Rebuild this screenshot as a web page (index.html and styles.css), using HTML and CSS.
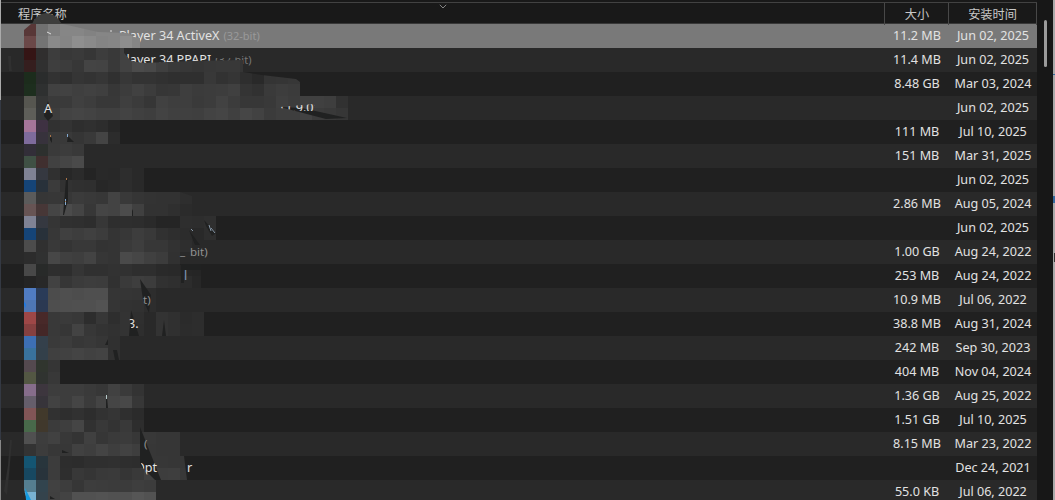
FILE: index.html
```
<!DOCTYPE html>
<html lang="zh-CN">
<head>
    <meta charset="UTF-8">
    <meta name="viewport" content="width=device-width, initial-scale=1.0">
    <title>程序列表</title>
    <link rel="stylesheet" href="styles.css">
</head>
<body>
    <div class="window">
        <div class="left-edge"></div>
        <div class="list">
            <div class="top-line"></div>
            <div class="row header">
                <div class="name">程序名称</div>
                <div class="size">大小</div>
                <div class="date">安装时间</div>
                <svg class="sort-arrow" width="8" height="5" viewBox="0 0 8 5"><path d="M0.8 0.8L4 4L7.2 0.8" fill="none" stroke="#858585"/></svg>
            </div>
            <div id="program-list">
                <!-- Program rows are added here -->
            </div>
        </div>
        <div class="scrollbar"><div class="thumb"></div></div>
        <div class="right-edge"><i class="mark mark-1"></i><i class="mark mark-2"></i><i class="mark mark-3"></i></div>
    </div>

    <!-- Mosaic over the program names -->
    <svg class="mosaic" width="360" height="500" viewBox="0 0 360 500">
        <defs>
            <clipPath id="brush">
                <path d="M24 30L31 24H63L98 32L128 33L134 37L140 38V48H124V53L131 61L144 63L190 61L243 60V72L262 75L296 79L300 82V96H348V120H120V144H84V168H144V192H180L192 196V216H216V240H207V252H180V265H201V288H156V312H204V336H120V360H60V384H144V432H180V456H184L187 480H156V500H27L24 490Z"/>
            </clipPath>
            <clipPath id="cut-version"><path d="M280 107L314 104L316 111L300 111L280 108Z"/></clipPath>
            <clipPath id="cut-three"><path d="M129 316H140V332H132Z"/></clipPath>
            <clipPath id="cut-opt"><path d="M140 461H160V475H147L142 466Z"/></clipPath>
        </defs>
        <path d="M32 24Q36 14 46 13Q55 13 62 24Z" fill="#3d3d3c"/>
        <path d="M118 53H122L120 57L126 62H118ZM216 53H240V57L232 58H216Z" fill="#292929"/>
        <g id="blocks" clip-path="url(#brush)" shape-rendering="crispEdges"></g>
        <g fill="#202121">
            <path d="M48 101L51 110L53 116L48 121L44 116L45 110Z"/>
            <path d="M280 107L302 108L347 118L326 119Z"/>
            <path d="M50 136L52 138V143L50 140Z"/>
            <path d="M68 136L74 142H67Z"/>
            <path d="M66 179H68V200L64 215H63Z"/>
            <path d="M132 209L133 211V216H132Z"/>
            <path d="M189 230L200 245H195Z"/>
            <path d="M204 220L216 233L212 236L206 226Z"/>
            <path d="M140 279L151 295L149 313L143 300Z"/>
            <path d="M131 310L139 336H129Z"/>
            <path d="M164 320L166 336H162Z"/>
            <path d="M108 339V345H105Z"/>
            <path d="M113 350H117L119 360H115Z"/>
            <path d="M106 397H107L108 408H106Z"/>
            <path d="M140 427L161 480H155L140 465Z"/>
            <path d="M62 450L69 453H62Z"/>
            <path d="M50 496L55 499H50Z"/>
            <path d="M181 264H201V270H184V283H181Z"/>
        </g>
        <g class="pieces">
            <text x="44" y="113">A</text>
            <text x="278" y="112" clip-path="url(#cut-version)">11.9.01</text>
            <text x="180" y="255" class="dim">_</text>
            <text x="190" y="256" class="dim">bit)</text>
            <text x="184" y="280" class="blue">l</text>
            <text x="143" y="304" class="dim">t)</text>
            <text x="128" y="328" clip-path="url(#cut-three)">3.</text>
            <text x="144" y="448" class="dim">(</text>
            <text x="135" y="472" clip-path="url(#cut-opt)">Opt</text>
            <text x="187" y="472">r</text>
        </g>
        <path d="M47 32L51 34M110 31H112" stroke="#dddddd"/>
        <path d="M67.500 134V137M65.500 199V205" stroke="#82a9d0"/>
        <path d="M50.500 135V137M66.500 178V180M65.500 201V202" stroke="#a87348"/>
        <path d="M106.500 395V399" stroke="#b4c8c8"/>
        <path d="M209 225L211 231M211 228L215 233M191 229L193 231" stroke="#8797a7"/>
        <path d="M24 302Q27 304 25 308Z" fill="#0d7cf5"/>
        <path d="M25 488L31 500H26Z" fill="#159be1"/>
        <path d="M8 56H11V64L12 71H9ZM10 440H12L9 474L7 495L4 491L8 465Z" fill="#303030"/>
    </svg>

    <script>
        const programs = [
            ['Player 34 ActiveX', '(32-bit)', '11.2 MB', 'Jun 02, 2025'],
            ['Player 34 PPAPI', '(32-bit)', '11.4 MB', 'Jun 02, 2025'],
            ['', '', '8.48 GB', 'Mar 03, 2024'],
            ['', '', '', 'Jun 02, 2025'],
            ['', '', '111 MB', 'Jul 10, 2025'],
            ['', '', '151 MB', 'Mar 31, 2025'],
            ['', '', '', 'Jun 02, 2025'],
            ['', '', '2.86 MB', 'Aug 05, 2024'],
            ['', '', '', 'Jun 02, 2025'],
            ['', '', '1.00 GB', 'Aug 24, 2022'],
            ['', '', '253 MB', 'Aug 24, 2022'],
            ['', '', '10.9 MB', 'Jul 06, 2022'],
            ['', '', '38.8 MB', 'Aug 31, 2024'],
            ['', '', '242 MB', 'Sep 30, 2023'],
            ['', '', '404 MB', 'Nov 04, 2024'],
            ['', '', '1.36 GB', 'Aug 25, 2022'],
            ['', '', '1.51 GB', 'Jul 10, 2025'],
            ['', '', '8.15 MB', 'Mar 23, 2022'],
            ['', '', '', 'Dec 24, 2021'],
            ['', '', '55.0 KB', 'Jul 06, 2022']
        ];

        // one line per 12px of height: two icon colours, then grey levels
        const blocks = [
            '583737 707070 7e 86 86 82 86 86 86',
            '6b4848 747474 8a 85 8f 8a 84 86 8e 86',
            '351515 302e2e 3d 38 3a 36 3d 39 40 46',
            '351e1e 303030 3e 3c 37 44 43 39 42 4b 48 3f 39 37 35 37 38 38 35 34',
            '1c2c1c 2a2c2c 32 2f 35 33 36 30 37 33 33 31 2f 2f 2f 38 32 35 2e 29 34 35 37 36 37',
            '1d2e1e 2e3030 41 42 3f 41 3f 37 3c 41 3c 36 37 3e 3b 3c 3d 40 34 31 3a 3d 3b 3a 3f',
            '565650 343535 3a 3a 40 3d 38 38 3f 3b 36 41 3e 3e 3a 3c 42 3c 37 37 39 3f 3c 40 40 3e 31',
            '5e5e59 343637 3d 43 45 43 40 40 43 40 3e 43 40 40 3f 43 45 40 46 42 3b 3e 3e 42 3b 39 36',
            'a57599 3e3142 31 33 2e 30 2d 27',
            '7e6b9c 37323c 39 39 35 39 44 2c',
            '322e38 2d302e 3a 3c 39',
            '3f5044 402f2f 41 45 4a',
            '7f8294 353840 30 27 2b 24 29 28 2d 29',
            '154477 28313a 3b 32 30 2f 27 29 2d 29',
            '5b5b5b 363636 37 37 3b 39 37 43 39 35 33 32 32 2e',
            '675454 473737 45 4b 44 37 45 43 4c 40 32 32 2f 2b',
            '7f8294 353840 35 30 2f 2d 37 2e 2e 2d 2a 25 25 2e 2d 2f',
            '154477 28313a 37 40 3d 40 3c 34 37 3d 39 31 2e 2c 29 2e',
            '4c4c4c 303030 39 34 38 38 33 34 3a 3e 37 37 32 2e',
            '2c2c2c 303131 47 40 3e 43 36 34 4a 46 40 3c 31 2d',
            '484848 282a29 2e 2d 35 30 30 32 31 2e 2e 2a 29 26 25',
            '242424 282828 42 36 3b 3d 3c 31 3a 3e 3c 31 2f 2c 27',
            '507cc3 2a3b58 4c 4f 4d 4f 4f 35 35 34 2d',
            '4e77b5 2b3952 4e 4f 50 50 53 35 32 31 2d',
            '9e4747 482929 39 3a 38 2d 37 2e 33 2f 29 33 30 2b 2d',
            '854040 442727 39 36 43 37 33 31 33 2e 29 33 30 2c 2d',
            '3d6fb4 34404b 3a 3c 37 39 36 30 2b',
            '39729d 33404a 40 41 44 41 43 30 2c',
            '54494f 30352e 35',
            '535743 303330 38',
            '866d8b 3d363e 3d 3d 3d 3a 37 41 3a 33',
            '655e6b 37343a 42 3d 45 3b 44 45 48 37',
            '815556 41392b 31 2e 31 2d 32 35 2f 2b',
            '48694a 40382c 3b 3e 45 31 38 33 39 2d',
            '505050 3d3d3d 41 38 34 40 36 3a 3b 37 38 36 36',
            '333333 3c3c3c 37 37 41 3e 44 3e 42 3e 37 36 36',
            '145572 28353c 3c 2d 2c 2f 2f 30 2e 2d 37 37 36 36',
            '174861 28333b 3c 2e 38 35 39 3a 35 39 40 3d 3e 38',
            '557e90 32444e 41 3d 36 3d 3c 3b 3b 3e 3c',
            '78b2d2 34434c 40 43 51 51 53 51 51 56 52'
        ];

        document.getElementById('program-list').innerHTML = programs.map(p => `
            <div class="row">
                <div class="name">${p[0]}<span class="bits">${p[1]}</span></div>
                <div class="size">${p[2]}</div>
                <div class="date">${p[3]}</div>
            </div>`).join('');

        let rects = '';
        blocks.forEach((line, y) => {
            line.split(' ').forEach((c, x) => {
                const color = c.length === 2 ? c + c + c : c;
                rects += `<rect x="${24 + x * 12}" y="${24 + y * 12}" width="12" height="12" fill="#${color}"/>`;
            });
        });
        document.getElementById('blocks').innerHTML = rects;
    </script>
</body>
</html>
```
FILE: styles.css
```
body {
    margin: 0;
    background-color: #171717;
    font-family: "Noto Sans", "Noto Sans CJK SC", sans-serif;
    font-size: 12.6px;
    color: #e2e2e2;
    overflow: hidden;
}
.window {
    display: flex;
    height: 500px;
    overflow: hidden;
}
.left-edge {
    width: 1px;
    background: linear-gradient(#aaaaaa 100px, #343943 100px, #343943 440px, #888888 440px);
}
.list {
    width: 1036px;
    height: 500px;
    overflow: hidden;
}
.top-line {
    height: 2px;
    background-color: #191919;
    border-bottom: 1px solid #424242;
}
.row {
    display: grid;
    grid-template-columns: 884px 64px 88px;
    height: 24px;
    line-height: 24px;
    background-color: #202020;
}
.row:nth-child(even) {
    background-color: #292929;
}
.row:first-child {
    background-color: #797979;
}
.row.header {
    position: relative;
    height: 20px;
    line-height: 22px;
    background-color: #191919;
    border-bottom: 1px solid #383838;
    font-family: "Noto Sans CJK SC", sans-serif;
    font-size: 12.2px;
    color: #c8c8c8;
}
.name {
    padding-left: 118px;
    white-space: pre;
}
.header .name {
    padding-left: 17px;
}
.size, .date {
    text-align: center;
}
.header .size, .header .date {
    border-left: 1px solid #484848;
    margin-left: -1px;
}
.header .date {
    border-right: 1px solid #484848;
}
.bits {
    margin-left: 4px;
    font-size: 11px;
    color: #999999;
}
.row:nth-child(2) .bits {
    color: #777777;
}
.sort-arrow {
    position: absolute;
    left: 438px;
    top: 1px;
}
.scrollbar {
    width: 16px;
    background-color: #171717;
}
.thumb {
    width: 3px;
    height: 47px;
    margin: 20px 0 0 7px;
    border-radius: 2px;
    background-color: #9b9b9b;
}
.right-edge {
    position: relative;
    width: 2px;
    background-color: #aaaaaa;
}
.mark {
    position: absolute;
    right: 0;
    width: 2px;
    height: 1px;
    background-color: #356a9e;
}
.mark-1 {
    top: 74px;
}
.mark-2 {
    top: 196px;
    height: 7px;
}
.mark-3 {
    top: 253px;
    height: 9px;
    width: 1px;
    background-color: #333333;
}
.mosaic {
    position: absolute;
    left: 0;
    top: 0;
}
.pieces {
    fill: #e2e2e2;
}
.dim {
    fill: #929292;
    font-size: 11.5px;
}
.blue {
    fill: #8199bc;
}
```
